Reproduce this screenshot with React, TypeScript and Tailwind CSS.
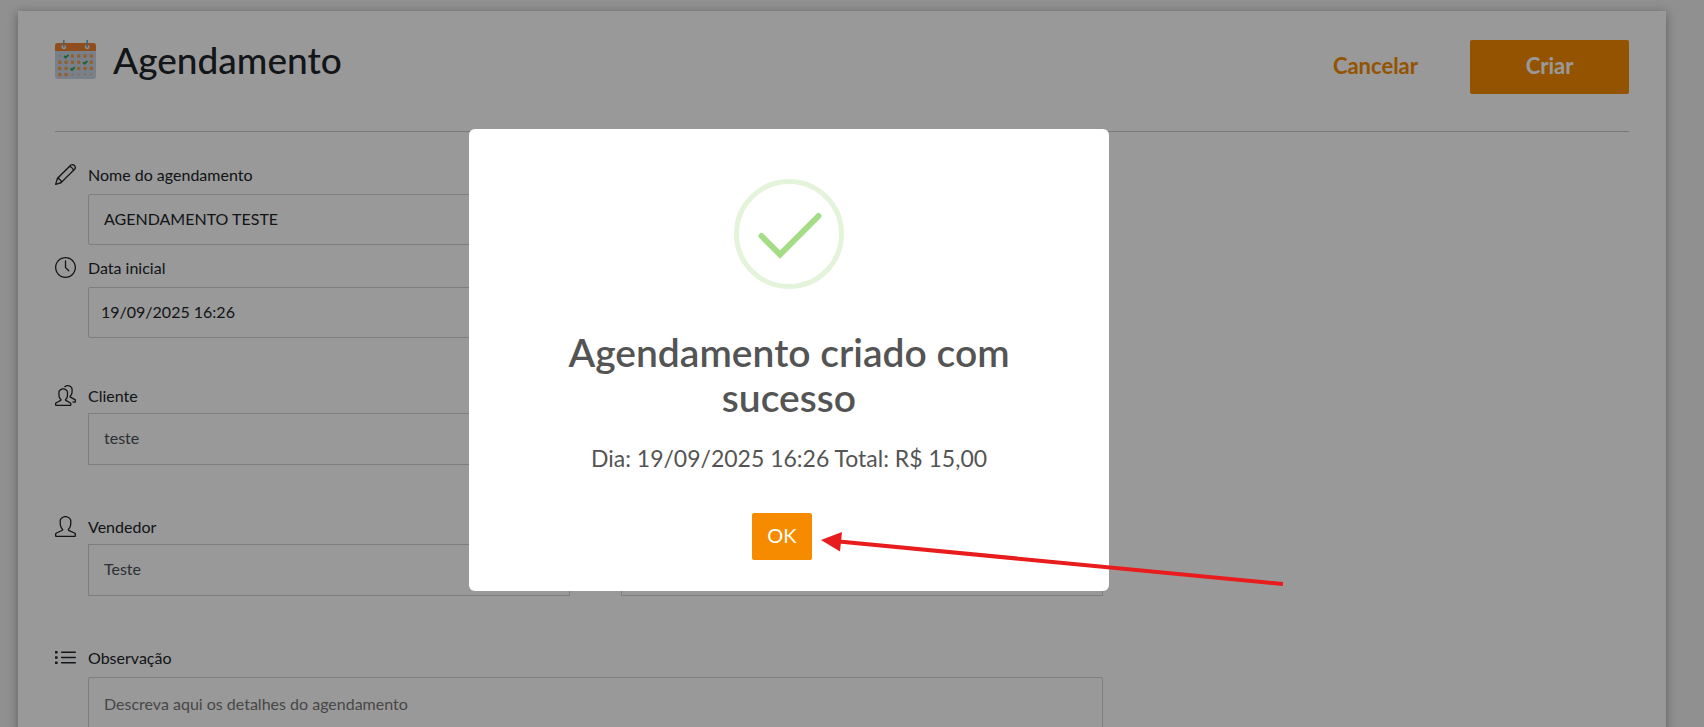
import { useState } from "react";
import type { ElementType, ReactNode } from "react";
import { SlClock, SlList, SlPencil, SlPeople, SlUser } from "react-icons/sl";

// ---------------------------------------------------------------------------
// Drawings
// ---------------------------------------------------------------------------

const DAYS = Array.from({ length: 24 }, (_, i) => ({ col: i % 6, row: Math.floor(i / 6) }));
const CHECKED = [1, 10, 14];
const FADED = [0, 20, 21, 22, 23];

const CalendarIcon = () => (
  <svg width="42" height="40" viewBox="0 0 42 40" aria-hidden="true">
    <rect x="0" y="3" width="41" height="36" rx="3" fill="#cbd6e4" />
    <path d="M0 11V6a3 3 0 0 1 3-3h35a3 3 0 0 1 3 3v5z" fill="#f0822f" />
    {DAYS.map(({ col, row }, i) => {
      const x = 4.8 + col * 6.3;
      const y = 16 + row * 6.2;
      if (CHECKED.includes(i)) {
        return <path key={i} d={`M${x - 2} ${y}l1.6 1.6 2.8-2.8`} fill="none" stroke="#26a65b" strokeWidth="1.8" />;
      }
      const s = FADED.includes(i) ? 1.4 : 3.2;
      return <rect key={i} x={x - s / 2} y={y - s / 2} width={s} height={s} fill="#f0a04b" />;
    })}
    <circle cx="8.8" cy="7" r="2.3" fill="#e6ebf2" />
    <circle cx="32.2" cy="7" r="2.3" fill="#e6ebf2" />
    <path d="M8.8 0.5v6.5M32.2 0.5v6.5" stroke="#7ba3bd" strokeWidth="1.6" strokeLinecap="round" />
  </svg>
);

const SuccessIcon = () => (
  <svg width="110" height="110" viewBox="0 0 110 110" fill="none" aria-hidden="true">
    <circle cx="55" cy="55" r="52.5" stroke="#e3f4da" strokeWidth="5" />
    <path d="M27.5 57L46 75.5L84.5 37" stroke="#a5dc86" strokeWidth="6" strokeLinecap="round" />
  </svg>
);

const Arrow = () => (
  <svg
    width="464"
    height="56"
    viewBox="0 0 464 56"
    className="pointer-events-none absolute bottom-1 left-88"
    aria-hidden="true"
  >
    <path d="M18 10.5L462 53" stroke="#e81c1c" strokeWidth="4" />
    <path d="M0 9L21 1L19 20.5z" fill="#e81c1c" />
  </svg>
);

// ---------------------------------------------------------------------------
// Form parts
// ---------------------------------------------------------------------------

type FieldProps = {
  id: string;
  label: string;
  icon: ElementType;
  labelClass?: string;
  className?: string;
  children: ReactNode;
};

const Field = ({ id, label, icon: Icon, labelClass = "h-[30px]", className = "", children }: FieldProps) => (
  <div className={className}>
    <label htmlFor={id} className={`flex items-start gap-3 leading-[22px] ${labelClass}`}>
      <Icon size={21} />
      {label}
    </label>
    <div className="ml-[33px] flex gap-[51px]">{children}</div>
  </div>
);

const inputClass = "h-[51px] w-full min-w-0 rounded-xs border border-[#d3d3d3] bg-white pb-0.5 outline-none";
const selectClass =
  "h-[52px] w-full min-w-0 appearance-none border border-[#d3d3d3] bg-white px-[15px] pb-0.5 text-[#495057] outline-none";

// ---------------------------------------------------------------------------
// Page
// ---------------------------------------------------------------------------

export default function App() {
  const [open, setOpen] = useState(true);

  return (
    <div className="h-screen overflow-hidden bg-[#f0f0f0] pt-[11px] pr-[38px] pl-[18px] font-['Lato',sans-serif] text-base text-[#212529]">
      <main className="min-h-screen bg-white px-[37px] shadow-[0_2px_10px_rgba(0,0,0,0.35)]">
        <header className="flex h-[121px] items-start justify-between border-b border-[#c8c8c8] pt-[29px]">
          <div className="flex items-center gap-4">
            <CalendarIcon />
            <h1 className="text-[37px] leading-10 font-medium">Agendamento</h1>
          </div>
          <div className="flex text-[22px] font-bold">
            <button type="button" className="h-[54px] px-[52px] pb-1 text-[#f68b00]">
              Cancelar
            </button>
            <button type="button" className="h-[54px] w-[159px] rounded-xs bg-[#f68b00] pb-1 text-white">
              Criar
            </button>
          </div>
        </header>

        <form className="max-w-[1048px] pt-8">
          <Field id="nome" label="Nome do agendamento" icon={SlPencil} className="mb-3">
            <input id="nome" className={`${inputClass} px-[15px]`} defaultValue="AGENDAMENTO TESTE" />
          </Field>
          <Field id="data" label="Data inicial" icon={SlClock} className="mb-[47px]">
            <input id="data" className={`${inputClass} px-3`} defaultValue="19/09/2025 16:26" />
          </Field>
          <Field id="cliente" label="Cliente" icon={SlPeople} labelClass="h-7" className="mb-[51px]">
            <select id="cliente" className={selectClass}>
              <option>teste</option>
            </select>
          </Field>
          <Field id="vendedor" label="Vendedor" icon={SlUser} labelClass="h-7" className="mb-[51px]">
            <select id="vendedor" className={selectClass}>
              <option>Teste</option>
            </select>
            <select aria-label="Serviço" className={selectClass} />
          </Field>
          <Field id="obs" label="Observação" icon={SlList}>
            <textarea
              id="obs"
              rows={4}
              placeholder="Descreva aqui os detalhes do agendamento"
              className="w-full resize-none rounded-xs border border-[#d3d3d3] px-[15px] py-3.5 outline-none placeholder:text-[#777]"
            />
          </Field>
        </form>
      </main>

      {open ? (
        <div className="fixed inset-0 flex items-center justify-center bg-black/40 pr-[126px] pb-[7px]">
          <div
            role="dialog"
            aria-modal="true"
            aria-labelledby="dialog-title"
            className="relative flex w-[640px] flex-col items-center rounded-md bg-white px-20 pt-[50px] pb-[31px] text-center"
          >
            <SuccessIcon />
            <h2 id="dialog-title" className="mt-[41px] text-[39px] leading-[45px] font-semibold text-[#545454]">
              Agendamento criado com sucesso
            </h2>
            <p className="mt-[22px] text-[23px] leading-8 text-[#545454]">Dia: 19/09/2025 16:26 Total: R$ 15,00</p>
            <button
              type="button"
              onClick={() => setOpen(false)}
              className="mt-[39px] mr-[14px] h-[47px] w-[60px] rounded-xs bg-[#f68b00] pb-1 text-xl text-white"
            >
              OK
            </button>
            <Arrow />
          </div>
        </div>
      ) : null}
    </div>
  );
}
